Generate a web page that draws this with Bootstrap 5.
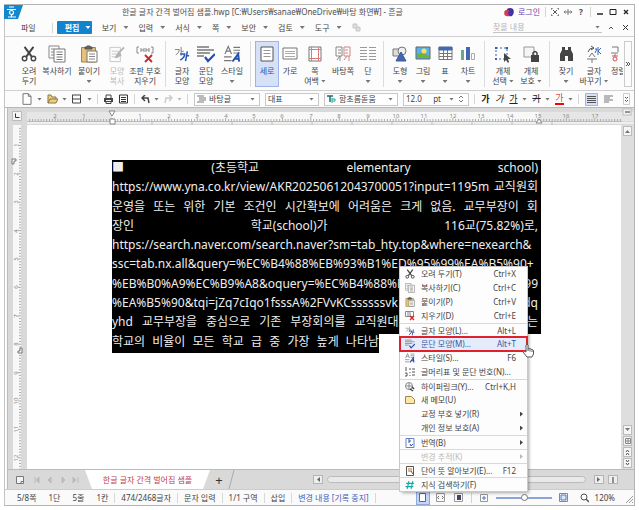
<!DOCTYPE html>
<html lang="ko">
<head>
<meta charset="utf-8">
<meta name="viewport" content="width=device-width, initial-scale=1">
<title>한글 글자 간격 벌어짐 샘플.hwp - 흔글</title>
<link href="https://cdn.jsdelivr.net/npm/bootstrap@5.3.0/dist/css/bootstrap.min.css" rel="stylesheet">
<style>
:root{--ui:"Noto Sans","Noto Sans CJK KR",sans-serif;}
body{font-family:var(--ui);font-size:8px;line-height:10px;color:#444;padding:4px;height:100vh;overflow:hidden;background:#fff}
button,input,select{font:inherit;color:inherit;background:none;border:0;padding:0;margin:0}
svg{display:block;flex:none;fill:none;stroke:#555}
.app-window{border:1px solid #b4b4b4;border-left-color:#c4c4c4;background:#fcfcfc}
.title-bar{min-height:14px}
.title-text{padding-left:99px;color:#505050}
.brand{margin-left:-1px}
.login{color:#6a3fb0}
.win-tools{gap:5px;padding-right:4px}
.win-tools button{width:8px}
.vline{width:1px;height:10px;background:#d4d4d4;flex:none}
.menu-row{min-height:18px;border-bottom:1px solid #cfcfcf;padding-right:5px}
.menu-row>button{display:flex;align-items:center;gap:7px;padding-right:10px}
.arrow{width:5px;height:3px;background:#777;clip-path:polygon(0 0,100% 0,50% 100%);flex:none}
.menu-row>.file-item{padding:0 16px 0 16px}
.menu-row>.edit-item{background:#1283cf;color:#fff;font-weight:700;border-radius:1px;height:13px;width:35px;padding:0 3px 0 8px;gap:6px;margin:0 10px 0 4px}
.edit-item .arrow{background:#fff}
.find-box{width:109px;border-bottom:1px solid #c4c4c4!important;margin-right:6px;padding-right:2px}
.find-box input{min-width:0;width:90px}
.find-box input::placeholder{color:#b4b4b4;opacity:1}
.menu-row>.tiny{padding:0}
.ribbon{min-height:53px;padding:4px 3px 3px 12px;border-bottom:1px solid #cfcfcf}
.tool{display:flex;flex-direction:column;align-items:center;width:24px;padding-top:3px;flex:none;white-space:nowrap;border:1px solid transparent}
.tool span{display:block}
.tool svg{margin-bottom:3px}
.tool .arrow{margin-top:4px}
.tool .with-arrow{display:flex;align-items:center;gap:2px}
.tool .with-arrow .arrow{margin:0}
.w-22{width:22px}.w-28{width:28px}.w-32{width:32px}
.tool.active{background:#d6e1f8;border-color:#9db5e6;color:#2d50a8}
.tool.disabled-tool{color:#b9b9b9}
.group-line{width:1px;background:#dcdcdc;margin:0 4px;flex:none}
.clip{width:14px;overflow:hidden;align-items:flex-start}
.more{width:8px;border:1px solid #ccc;margin-left:auto}
.quick{min-height:17px;padding:0 4px 0 16px;border-bottom:1px solid #b8b8b8}
.quick svg,.quick .vline{margin-right:6px}
.quick .arrow{margin-right:5px}
.quick svg.snug{margin-right:4px}
.combo{border:1px solid #c8c8c8;height:13px;background:#fff;padding:0 4px 0 2px;margin-right:5px;flex:none}
.quick .combo svg{margin-right:3px}
.quick .combo .arrow{margin-right:0}
.combo select,.combo input{appearance:none;min-width:0;flex:1 1 0;outline:0}
.w-66{width:66px}.w-54{width:54px}.w-74{width:74px}
.fmt{width:9px;height:12px;font-size:9px;color:#222}
.fmt.colored{border-bottom:2px solid red!important;color:#d44}
.quick .fmt-gap{margin-right:5px}
.workspace{background:#d9d9d9;border-left:1px solid #bcbcbc;margin-left:2px;min-height:0}
.canvas-row{min-height:0}
.ruler-h{height:17px;width:100%}
.ruler-v{width:19px}
.page{background:#fff;padding:35px 0 0 85px;min-width:0;overflow:hidden}
.selection{background:#000;color:#eee;width:429px;height:193px;display:grid;grid-auto-rows:1fr;font:12px/15px "Noto Sans","Noto Sans CJK KR",sans-serif;padding-right:3px;white-space:nowrap}
.selection>div{display:flex;justify-content:space-between;align-items:flex-start;min-height:0}
.selection .tail{background:#fff;margin-right:-3px;width:162px;align-self:stretch}
.vscroll{width:13px;background:#dedede;padding:1px 2px;gap:1px}
.vscroll button{width:9px;height:10px;border:1px solid #bbb;background:#f6f6f6;display:grid;place-items:center}
.tabs{min-height:20px;background:#d9d9d9;border-top:1px solid #bbb;padding-left:8px}
.tabs svg{margin-right:3px}
.tabs .tab-edge{margin-right:78px}
.sheet-tab{background:#fff;color:#c43a48;clip-path:polygon(0 0,100% 0,calc(100% - 7px) 100%,7px 100%);width:125px;height:19px;place-items:center}
.plus-tab{font-size:13px;color:#333;width:18px}
.hscroll{height:7px;border:1px solid #bbb;border-radius:4px;background:#e9e9e9}
.mini{width:10px;height:9px;border:1px solid #b4b4b4;background:#eee;display:grid;place-items:center}
.status{min-height:16px;padding-left:6px;background:#fafafa;border-top:1px solid #ccc}
.status>span{padding:0 6px;white-space:nowrap}
.status>.cell-end{border-right:1px solid #d8d8d8}
.status .note{color:#3c5fc0}
.view-icons{gap:6px}
.view-icons button{width:12px;height:12px;display:grid;place-items:center}
.view-icons .on{background:#c5d4f4;outline:1px solid #8fa9de}
.zoom-range{appearance:none;width:56px;height:8px;background:linear-gradient(#8da4d8,#8da4d8) center/100% 2px no-repeat}
.zoom-range::-webkit-slider-thumb{appearance:none;width:7px;height:7px;border:1px solid #777;border-radius:50%;background:#fff}
.ctx{left:400px;top:267px;width:127px;background:#fdfdfd;box-shadow:0 0 0 1px #c9c9c9,2px 2px 3px #0005}
.ctx button{display:grid;grid-template-columns:21px 1fr auto;align-items:center;width:100%;height:14px;padding-right:11px;text-align:left;white-space:nowrap}
.ctx svg{margin-left:5px}
.ctx .split{border-top:1px solid #d9d9d9}
.ctx .sub{padding-right:4px}
.ctx .off{color:#bbb}
.ctx .chosen{background:#e4ecfb;color:#3456a8;outline:2px solid #e0202c;outline-offset:-1px}
.sub i{width:3px;height:5px;background:currentColor;clip-path:polygon(0 0,100% 50%,0 100%)}
.hand{left:522px;top:343px}
</style>
</head>
<body>
<svg width="0" height="0" class="position-absolute" aria-hidden="true">
<symbol id="cut" viewBox="0 0 18 18"><path d="M4 1l8 11M14 1L6 12" stroke="#444" stroke-width="2.2"/><circle cx="4" cy="14" r="2.5" stroke="#444" stroke-width="1.6"/><circle cx="14" cy="14" r="2.5" stroke="#444" stroke-width="1.6"/></symbol>
<symbol id="copy" viewBox="0 0 18 18"><path d="M6 13H1V1h10v3M3 4h3M3 7h3M3 10h3" stroke="#888"/><path d="M6 4h11v13H6z" fill="#fff" stroke="#777"/><path d="M8.500 7h6M8.500 9.500h6M8.500 12h6M8.500 14.500h6" stroke="#777"/></symbol>
<symbol id="paste" viewBox="0 0 18 18"><path d="M1.500 2.500h14V17h-14z" fill="#e5c277" stroke="#a58448"/><path d="M5 4V2h2V1h3v1h2v2z" fill="#666" stroke="#555"/><path d="M7 6h10v11H7z" fill="#fff" stroke="#777"/><path d="M9 9h6M9 11.500h6M9 14h6" stroke="#888"/></symbol>
<symbol id="brush" viewBox="0 0 18 18"><path d="M1 2h11v15H1zM3 6h7M3 9h5M3 12h4" stroke="#c6c6c6"/><path d="M16 2l-6 6M10 8l-3 5 5-3z" fill="#bbb" stroke="#b3b3b3" stroke-width="2"/></symbol>
<symbol id="charshape" viewBox="0 0 18 18"><path d="M1 4h5q0 4-4 6M8 1v10M8 6h3" stroke="#777"/><path d="M7 9h5q0 4-5 7M15 6l-2 11M14 11h3" stroke="#2856b4" stroke-width="1.700"/></symbol>
<symbol id="parashape" viewBox="0 0 18 18"><path d="M0 2h12M0 5h17M0 8h13M0 11h7" stroke="#777" stroke-width="1.300"/><path d="M8 12l3 4 7-7" stroke="#2450ad" stroke-width="2.200"/></symbol>
<symbol id="styles" viewBox="0 0 18 18"><path d="M1 9l3.500-8L8 9M2 6h5M10 2h7M10 5h7M10 8h7M0 12h8M0 16h8" stroke="#777" stroke-width="1.200"/><path d="M9 17l6-8 1 8M11 14h5" stroke="#2450ad" stroke-width="2"/></symbol>
<symbol id="doc" viewBox="0 0 18 18"><path d="M3 1h8l4 4v12H3zM11 1v4h4" stroke="#777" fill="#fff" stroke-width="1.500"/></symbol>
<symbol id="hash" viewBox="0 0 18 18"><path d="M7 2L4 16M14 2l-3 14M2 6h14M1 12h14" stroke="#17a8a8" stroke-width="2"/></symbol>
</svg>

<div class="app-window h-100 d-flex flex-column">
  <header class="title-bar d-flex align-items-center">
    <svg class="brand" width="19" height="14" viewBox="0 0 19 14"><path d="M0 0h19l-5 14H0z" fill="#1388cd" stroke="none"/><path d="M5 2h5M3 4.500h9M4 12h8M7.500 10v2" stroke="#fff" stroke-width="1.200"/><circle cx="7.500" cy="7.500" r="2" stroke="#fff" stroke-width="1.200"/></svg>
    <div class="title-text flex-grow-1 text-nowrap">한글 글자 간격 벌어짐 샘플.hwp [C:₩Users₩sanae₩OneDrive₩바탕 화면₩] - 흔글</div>
    <div class="win-tools d-flex align-items-center">
      <button class="login w-auto d-flex align-items-center gap-1 text-nowrap" type="button"><svg width="10" height="9" viewBox="0 0 10 9" stroke="none"><path d="M3 1q3-2 6 0 2 4-1 7-4 1-5-2z" fill="#3c2fa0" stroke="none"/><circle cx="3.500" cy="5" r="3.300" fill="#d83a50" stroke="none"/><path d="M5 2q4 1 3 6-4 0-4-3z" fill="#4a2fb0" stroke="none"/></svg>로그인</button>
      <span class="vline"></span>
      <button type="button" aria-label="전체 화면"><svg width="8" height="8"><path d="M0 2V0h2M6 0h2v2M8 6v2H6M2 8H0V6M2 2l4 4M6 2L2 6" /></svg></button>
      <button type="button" aria-label="이동"><svg width="8" height="8"><path d="M0 4h8M4 1v6M1.500 2.500L0 4l1.500 1.500M6.500 2.500L8 4 6.500 5.500" stroke="#777"/></svg></button>
      <button type="button" class="fw-bold">?</button>
      <span class="vline"></span>
      <button type="button" aria-label="최소화"><svg width="8" height="8"><path d="M1 6h6" stroke="#222" stroke-width="1.500"/></svg></button>
      <button type="button" aria-label="최대화"><svg width="8" height="8"><path d="M1 1.500h6v5H1z" stroke="#222"/></svg></button>
      <button type="button" aria-label="닫기"><svg width="8" height="8"><path d="M2 2l4 4M6 2L2 6" stroke="#222" stroke-width="1.300"/></svg></button>
    </div>
  </header>

  <nav class="menu-row d-flex align-items-center text-nowrap">
    <button class="file-item" type="button">파일</button><span class="vline"></span>
    <button class="edit-item" type="button">편집<i class="arrow"></i></button>
    <button type="button">보기<i class="arrow"></i></button>
    <button type="button">입력<i class="arrow"></i></button>
    <button type="button">서식<i class="arrow"></i></button>
    <button type="button">쪽<i class="arrow"></i></button>
    <button type="button">보안<i class="arrow"></i></button>
    <button type="button">검토<i class="arrow"></i></button>
    <button type="button">도구<i class="arrow"></i></button>
    <svg width="9" height="9"><path d="M1 1h4v4H1zM4 4h4v4H4z" fill="#ddd" stroke="#c8c8c8"/></svg>
    <div class="find-box d-flex align-items-center justify-content-between ms-auto"><input type="text" placeholder="찾을 내용" aria-label="찾을 내용"><i class="arrow"></i></div>
    <button class="tiny me-2" type="button" aria-label="접기"><svg width="6" height="6"><path d="M1 4l2-2 2 2"/></svg></button>
    <button class="tiny" type="button" aria-label="닫기"><svg width="7" height="7"><path d="M1 1l5 5M6 1L1 6" stroke="#333"/></svg></button>
  </nav>

  <div class="ribbon d-flex">
    <button class="tool" type="button"><svg width="16" height="18"><use href="#cut"/></svg><span>오려</span><span>두기</span></button>
    <button class="tool w-32" type="button"><svg width="18" height="18"><use href="#copy"/></svg><span>복사하기</span></button>
    <button class="tool w-32" type="button"><svg width="18" height="18"><use href="#paste"/></svg><span>붙이기</span><i class="arrow"></i></button>
    <button class="tool disabled-tool" type="button"><svg width="17" height="18"><use href="#brush"/></svg><span>모양</span><span>복사</span></button>
    <button class="tool w-32" type="button"><svg width="18" height="18"><path d="M3 2H1v6h2M15 2h2v6h-2M5 3v4M8 3v4M10 3v4M13 3v4M5 5h3M10 5h3" stroke="#888"/><path d="M9 10l7 7M16 10l-7 7" stroke="#d3212d" stroke-width="1.800"/></svg><span>조판 부호</span><span>지우기</span></button>
    <span class="group-line"></span>
    <button class="tool" type="button"><svg width="16" height="18"><use href="#charshape"/></svg><span>글자</span><span>모양</span></button>
    <button class="tool" type="button"><svg width="18" height="18"><use href="#parashape"/></svg><span>문단</span><span>모양</span></button>
    <button class="tool w-28" type="button"><svg width="17" height="18"><use href="#styles"/></svg><span>스타일</span><i class="arrow"></i></button>
    <span class="group-line"></span>
    <button class="tool active" type="button"><svg width="14" height="18"><path d="M1 2h12v14H1z" stroke="#555" fill="#fff"/><path d="M3.500 5.500h7M3.500 8.500h7M3.500 11.500h7" stroke="#999"/></svg><span>세로</span></button>
    <button class="tool w-22" type="button"><svg width="16" height="18"><path d="M1 3h14v11H1z" stroke="#777" fill="#fff"/><path d="M3 6.500h10M3 8.500h10M3 11.500h10" stroke="#aaa"/></svg><span>가로</span></button>
    <button class="tool w-28" type="button"><svg width="14" height="18"><path d="M1 2h12v14H1z" stroke="#777" fill="#fff"/><path d="M3.500 2v14M10.500 2v14M1 4.500h12M1 13.500h12" stroke="#d77a7a"/></svg><span>쪽</span><span class="with-arrow">여백<i class="arrow"></i></span></button>
    <button class="tool w-28" type="button"><svg width="16" height="18"><path d="M1 2h6v9H1zM2 15l3-4M3 5h3M3 8h3M5 11v5" stroke="#888"/><path d="M9 2h6v9H9zM9 15l3-4M10 5h3M10 8h3M14 11v5" stroke="#d58080"/></svg><span>바탕쪽</span></button>
    <button class="tool w-22" type="button"><svg width="16" height="18"><path d="M0 2.500h7M0 5.500h7M0 8.500h7M0 11.500h7M0 14.500h7M9 2.500h7M9 5.500h7M9 8.500h7M9 11.500h7M9 14.500h7" stroke="#999"/></svg><span>단</span><i class="arrow"></i></button>
    <span class="group-line"></span>
    <button class="tool" type="button"><svg width="16" height="18"><path d="M1 4h8v7H1z" fill="#ddd" stroke="#777"/><circle cx="10" cy="6" r="4" fill="#eee" stroke="#777"/><path d="M9 7l5 9H4z" fill="#4468b0" stroke="#36589c"/></svg><span>도형</span><i class="arrow"></i></button>
    <button class="tool w-22" type="button"><svg width="16" height="18"><path d="M1 2h14v12H1z" fill="#5ab0e8" stroke="#666"/><path d="M2 13V9q5-3 12 2v2z" fill="#6fb33c" stroke="none"/><circle cx="9" cy="6" r="2.500" fill="#ffe25c" stroke="none"/></svg><span>그림</span><i class="arrow"></i></button>
    <button class="tool w-22" type="button"><svg width="15" height="18"><path d="M1 2.500h13v12H1zM5.500 5v10M9.500 5v10M1 8.500h13M1 11.500h13" stroke="#777"/><path d="M1 2h13v3H1z" fill="#4468b0" stroke="#4468b0"/></svg><span>표</span><i class="arrow"></i></button>
    <button class="tool" type="button"><svg width="16" height="18"><path d="M1 5h3v10H1z" fill="#67a98c" stroke="none"/><path d="M6 2h4v13H6z" fill="#4468b0" stroke="none"/><path d="M11.500 8.500h3v6h-3z" stroke="#aaa"/></svg><span>차트</span><i class="arrow"></i></button>
    <span class="group-line"></span>
    <button class="tool w-28" type="button"><svg width="18" height="18"><path d="M2 3h11v11H2z" stroke="#3b5da8" stroke-dasharray="2 2"/><path d="M1 2h2v2H1zM12 2h2v2h-2zM1 13h2v2H1z" fill="#3b5da8" stroke="none"/><path d="M10 8v9l2-2 2 3 1-1-1-3h3z" fill="#444" stroke="none"/></svg><span>개체</span><span class="with-arrow">선택<i class="arrow"></i></span></button>
    <button class="tool w-28" type="button"><svg width="18" height="18"><path d="M2 2h10v10H2z" fill="#f5f5f5" stroke="#999"/><path d="M9 10h8v7H9z" fill="#444" stroke="none"/><path d="M11 10V8q2-3 4 0v2" stroke="#444" stroke-width="1.500"/></svg><span>개체</span><span class="with-arrow">보호<i class="arrow"></i></span></button>
    <span class="group-line"></span>
    <button class="tool" type="button"><svg width="15" height="18"><path d="M3 2h3v3h3V2h3v3l2 4v7H9v-5H6v5H1V9l2-4z" fill="#444" stroke="none"/></svg><span>찾기</span><i class="arrow"></i></button>
    <button class="tool w-32" type="button"><svg width="16" height="18"><path d="M2 7q1-4 5-4M5 1l3 2-3 2" stroke="#555"/><path d="M12 2v8M9 4h2l-2 4M15 3l-3 3 3 3" stroke="#3866b8"/><path d="M6 8l-3 4M6 8l3 4M1 14h10M6 14v4" stroke="#777"/></svg><span>글자</span><span class="with-arrow">바꾸기<i class="arrow"></i></span></button>
    <button class="tool clip" type="button"><svg width="8" height="18"><path d="M1 2h6v5M0 8h7" stroke="#777"/><path d="M1 11h6M4 9v2" stroke="#d05050"/><circle cx="4" cy="14" r="2" stroke="#d05050"/></svg><span>정렬</span></button>
    <button class="more" type="button" aria-label="더 보기"><svg width="6" height="6"><path d="M1 1l2 2-2 2M3 1l2 2-2 2"/></svg></button>
  </div>

  <div class="quick d-flex align-items-center">
    <svg width="12" height="12" class="snug"><use href="#doc"/></svg><i class="arrow"></i>
    <svg width="11" height="10" class="snug"><path d="M1 9V1h3l1 2h4v2M1 9l2-4h8L9 9z" fill="#edcf84" stroke="#8b7440"/></svg><i class="arrow"></i>
    <svg width="9" height="10"><path d="M.500 1v8h8V1M1 5h8M0 1h9" stroke="#444"/></svg><i class="arrow"></i>
    <span class="vline"></span>
    <svg width="9" height="10"><path d="M2 4V1h5v3M2 8v1.500h5V8" stroke="#444"/><path d="M0 4h9v4H0z" fill="#444" stroke="none"/><path d="M2 6.500h5" stroke="#fff"/></svg>
    <svg width="9" height="10"><path d="M.500 1h8v8h-8zM2 3.500h5M2 5.500h5M2 7.500h5" stroke="#333"/></svg>
    <span class="vline"></span>
    <svg width="9" height="9" class="snug"><path d="M1 3h6l1 5M4 0L1 3l3 3" stroke="#444" stroke-width="1.500"/></svg><i class="arrow"></i>
    <svg width="9" height="9" class="snug"><path d="M8 3H2L1 8M5 0l3 3-3 3" stroke="#ccc" stroke-width="1.500"/></svg><i class="arrow opacity-50"></i>
    <span class="vline"></span>
    <div class="combo w-66 d-flex align-items-center"><svg width="9" height="8"><path d="M0 1h7M2 3h7M2 5h7M0 7h7" stroke="#777"/></svg><select aria-label="스타일"><option>바탕글</option></select><i class="arrow"></i></div>
    <div class="combo w-54 d-flex align-items-center"><select aria-label="언어"><option>대표</option></select><i class="arrow"></i></div>
    <div class="combo w-74 d-flex align-items-center"><svg width="9" height="8"><path d="M0 1h6M3 1v6" stroke="#267" stroke-width="1.500"/><path d="M5 4h3v2H5M5 3v5" stroke="#2a9"/></svg><select aria-label="글꼴"><option>함초롬돋움</option></select><i class="arrow"></i></div>
    <div class="combo w-66 d-flex align-items-center"><input type="text" value="12.0" aria-label="글자 크기"><span class="me-2">pt</span><i class="arrow"></i><svg class="ms-1 me-0" width="6" height="10"><path d="M1 4l2-2 2 2M1 6l2 2 2-2" stroke="#777"/></svg></div>
    <span class="vline"></span>
    <button class="fmt fw-bold fmt-gap" type="button">가</button>
    <button class="fmt fst-italic fmt-gap" type="button">가</button>
    <button class="fmt text-decoration-underline me-1" type="button">가</button><i class="arrow"></i>
    <button class="fmt text-decoration-line-through me-1" type="button">가</button><i class="arrow"></i>
    <button class="fmt colored me-1" type="button">가</button><i class="arrow"></i>
    <span class="vline"></span>
    <svg width="13" height="13"><path d="M.500.500h12v12H.500z" fill="#d6e1f8" stroke="#9db5e6"/><path d="M2 3.500h9M2 5.500h9M2 7.500h9M2 9.500h9" stroke="#555"/></svg>
    <svg width="9" height="9"><path d="M0 1h9M0 3h6M0 5h9M0 7h5" stroke="#777"/></svg>
    <svg width="7" height="12" class="ms-auto me-0"><path d="M.500.500h6v11h-6z" stroke="#ccc"/><path d="M2 4l1.500 1.500L5 4M2 7l1.500 1.500L5 7"/></svg>
  </div>

  <main class="workspace flex-grow-1 d-flex flex-column">
    <svg class="ruler-h" id="rulerH"></svg>
    <div class="canvas-row d-flex flex-grow-1">
      <svg class="ruler-v h-100" id="rulerV"></svg>
      <article class="page flex-grow-1">
        <div class="selection">
          <div><span>■</span><span>(초등학교</span><span>elementary</span><span>school)</span></div>
          <div><span>https://www.yna.co.kr/view/AKR20250612043700051?input=1195m</span><span>교직원회</span></div>
          <div><span>운영을</span><span>또는</span><span>위한</span><span>기본</span><span>조건인</span><span>시간확보에</span><span>어려움은</span><span>크게</span><span>없음.</span><span>교무부장이</span><span>회</span></div>
          <div><span>장인</span><span>학교(school)가</span><span>116교(75.82%)로,</span></div>
          <div>https://search.naver.com/search.naver?sm=tab_hty.top&amp;where=nexearch&amp;</div>
          <div>ssc=tab.nx.all&amp;query=%EC%B4%88%EB%93%B1%ED%95%99%EA%B5%90+</div>
          <div><span>%EB%B0%A9%EC%B9%A8&amp;oquery=%EC%B4%88%EB%93%</span><span>99</span></div>
          <div><span>%EA%B5%90&amp;tqi=jZq7cIqo1fsssA%2FVvKCssssssvk</span><span>dq</span></div>
          <div><span>yhd</span><span>교무부장을</span><span>중심으로</span><span>기존</span><span>부장회의를</span><span>교직원대표와의</span><span>협의회로</span><span>운영하는</span></div>
          <div><div class="d-flex flex-grow-1 justify-content-between"><span>학교의</span><span>비율이</span><span>모든</span><span>학교</span><span>급</span><span>중</span><span>가장</span><span>높게</span><span>나타남</span></div><span class="tail"></span></div>
        </div>
      </article>
      <div class="vscroll d-flex flex-column">
        <button type="button" aria-label="위로"><svg width="5" height="4"><path d="M0 4l2.500-3L5 4z" fill="#777" stroke="none"/></svg></button>
        <button class="mt-auto" type="button" aria-label="아래로"><svg width="5" height="4"><path d="M0 0l2.500 3L5 0z" fill="#777" stroke="none"/></svg></button>
        <button type="button" aria-label="쪽 보기"><svg width="6" height="6"><path d="M.500.500h5v5h-5zM2 2h2v2H2z" stroke="#888"/></svg></button>
        <button type="button" aria-label="이전 쪽"><svg width="5" height="6"><path d="M1 3l1.500-2L4 3M1 6l1.500-2L4 6"/></svg></button>
        <button type="button" aria-label="다음 쪽"><svg width="5" height="6"><path d="M1 0l1.500 2L4 0M1 3l1.500 2L4 3"/></svg></button>
      </div>
    </div>
    <div class="tabs d-flex align-items-center">
      <svg width="8" height="8"><path d="M.500.500h7v7h-7zM5 8V5.500h3" stroke="#777" fill="#f3f3f3"/></svg><span class="vline me-1"></span>
      <svg width="50" height="8"><g fill="#bbb" stroke="#bbb"><path d="M3 1v6M7 1v6L4.500 4z" /><path d="M19 1v6l-3-3zM30 1v6l3-3z"/><path d="M41 1v6l3-3zM46 1v6"/></g></svg>
      <div class="sheet-tab d-grid text-nowrap">한글 글자 간격 벌어짐 샘플</div>
      <button class="plus-tab" type="button" aria-label="새 탭">+</button>
      <svg class="tab-edge" width="7" height="19"><path d="M1 19L6 0" stroke="#aaa"/></svg>
      <button class="mini me-1" type="button" aria-label="왼쪽"><svg class="m-0" width="4" height="5"><path d="M4 0L1 2.500 4 5z" fill="#666" stroke="none"/></svg></button>
      <div class="hscroll flex-grow-1 me-2"></div>
      <button class="mini me-1" type="button" aria-label="오른쪽"><svg class="m-0" width="4" height="5"><path d="M0 0l3 2.500L0 5z" fill="#666" stroke="none"/></svg></button>
      <button class="mini me-3" type="button" aria-label="분할"><svg class="m-0" width="2" height="6"><path d="M1 0v6" stroke="#333"/></svg></button>
    </div>
  </main>

  <footer class="status d-flex align-items-center">
    <span>5/8쪽</span><span>1단</span><span>5줄</span><span class="cell-end">1칸</span><span class="cell-end">474/2468글자</span><span class="cell-end">문자 입력</span><span class="cell-end">1/1 구역</span><span class="cell-end">삽입</span><span class="cell-end note">변경 내용 [기록 중지]</span>
    <div class="view-icons ms-auto d-flex align-items-center">
      <button class="on" type="button" aria-label="쪽 윤곽"><svg width="9" height="9"><path d="M1.500.500h6v8h-6z" fill="#fff" stroke="#666"/></svg></button>
      <button type="button" aria-label="폭 맞춤"><svg width="9" height="9"><path d="M.500.500h8v8h-8z" stroke="#999"/><path d="M3 3L1.500 4.500 3 6M6 3l1.500 1.500L6 6" stroke="#666"/></svg></button>
      <button type="button" aria-label="쪽 맞춤"><svg width="9" height="9"><path d="M.500.500h8v8h-8z" stroke="#999"/><path d="M3 2h4v5H3z" fill="#446" stroke="none"/></svg></button>
      <span class="vline"></span>
      <button type="button" aria-label="축소"><svg width="8" height="8"><path d="M.500.500h7v7h-7z" stroke="#999"/><path d="M3 3h2v2H3z" stroke="#5378c8"/></svg></button>
      <input class="zoom-range" type="range" min="0" max="100" value="52" aria-label="확대 비율">
      <button type="button" aria-label="확대"><svg width="9" height="9"><path d="M.500.500h8v8h-8z" stroke="#888"/><path d="M2 2h5v5H2z" stroke="#5378c8" fill="#dbe6fb"/></svg></button>
      <svg width="9" height="10" class="ms-1"><circle cx="4" cy="4" r="3"/><path d="M6 6l3 3" stroke-width="1.500"/></svg>
      <span>120%</span>
      <svg width="9" height="13" class="ms-1"><path d="M1 12l7-7M4 12l4-4M7 12l1-1" stroke="#999"/></svg>
    </div>
  </footer>
</div>

<div class="ctx position-absolute" role="menu">
  <button type="button" role="menuitem"><svg width="10" height="10"><use href="#cut"/></svg><span>오려 두기(T)</span><span>Ctrl+X</span></button>
  <button type="button" role="menuitem"><svg width="10" height="10"><use href="#copy"/></svg><span>복사하기(C)</span><span>Ctrl+C</span></button>
  <button type="button" role="menuitem"><svg width="10" height="10"><use href="#paste"/></svg><span>붙이기(P)</span><span>Ctrl+V</span></button>
  <button type="button" role="menuitem"><svg width="10" height="10"><path d="M.500.500h8v5h-8zM3 1v4M5 1v4" stroke="#888"/><path d="M5 5l4 4M9 5L5 9" stroke="#d22" stroke-width="1.300"/></svg><span>지우기(D)</span><span>Ctrl+E</span></button>
  <button class="split" type="button" role="menuitem"><svg width="10" height="10"><use href="#charshape"/></svg><span>글자 모양(L)...</span><span>Alt+L</span></button>
  <button class="chosen" type="button" role="menuitem"><svg width="10" height="10"><use href="#parashape"/></svg><span>문단 모양(M)...</span><span>Alt+T</span></button>
  <button type="button" role="menuitem"><svg width="10" height="10"><use href="#styles"/></svg><span>스타일(S)...</span><span>F6</span></button>
  <button type="button" role="menuitem"><svg width="10" height="10"><path d="M1 0v4M0 9h2V6H0M5 1v2M5 5v1M5 8v1M7 2h3M7 5h3M7 8h3"/></svg><span>글머리표 및 문단 번호(N)...</span></button>
  <button class="split" type="button" role="menuitem"><svg width="10" height="10"><circle cx="4" cy="4" r="3.500" stroke="#888"/><path d="M1 4h6M4 1v6" stroke="#888"/><path d="M5 7l3 2M7 5l2 2" stroke="#444" stroke-width="1.500"/></svg><span>하이퍼링크(Y)...</span><span>Ctrl+K,H</span></button>
  <button type="button" role="menuitem"><svg width="10" height="10"><path d="M.500 1.500h6l3 3v4h-9z" fill="#ffe7a3" stroke="#9a8555"/></svg><span>새 메모(U)</span></button>
  <button class="sub" type="button" role="menuitem"><span></span><span>교정 부호 넣기(R)</span><i></i></button>
  <button class="sub" type="button" role="menuitem"><span></span><span>개인 정보 보호(A)</span><i></i></button>
  <button class="sub split" type="button" role="menuitem"><svg width="10" height="10"><path d="M1 .500h8v9H1z" stroke="#6b83b8"/><path d="M3 2h2v2H3M5 6l1 2 2-2" stroke="#2d53b0"/></svg><span>번역(B)</span><i></i></button>
  <button class="sub split off" type="button" role="menuitem" disabled><span></span><span>변경 추적(K)</span><i></i></button>
  <button class="split" type="button" role="menuitem"><svg width="10" height="10"><path d="M1.500.500h7v9h-7z" fill="#fff"/><path d="M3 3h4M3 5h4" stroke="#b87030"/><path d="M6 5l2 3"/></svg><span>단어 뜻 알아보기(E)...</span><span>F12</span></button>
  <button class="split" type="button" role="menuitem"><svg width="10" height="10"><use href="#hash"/></svg><span>지식 검색하기(F)</span></button>
</div>
<svg class="hand position-absolute" width="12" height="15" viewBox="0 0 12 15" aria-hidden="true"><path d="M4 9V2q1-2 2 0v4q1-1 2 0 1-1 2 1 1-1 1.500 1v3l-1.500 3H5L1 9q0-2 2-.500z" fill="#fff" stroke="#555"/><path d="M6 6v2M8 6.500v2M10 7.500v1.500"/></svg>

<script>
const NS='http://www.w3.org/2000/svg';
function el(p,n,a,t){const e=document.createElementNS(NS,n);for(const k in a)e.setAttribute(k,a[k]);if(t!==undefined)e.textContent=t;p.appendChild(e);return e;}
const CM=28.4;
(function(){
  const s=document.getElementById('rulerH'),o=104;
  el(s,'rect',{x:19,y:4,width:'100%',height:9,fill:'#e6e6e6',stroke:'none'});
  el(s,'rect',{x:o,y:4,width:427,height:9,fill:'#f8f8f8',stroke:'none'});
  el(s,'rect',{x:19,y:14,width:'100%',height:2,fill:'#efefef',stroke:'none'});
  let d='',m='';
  for(let i=-30;i<180;i++){const x=(o+i*CM/10).toFixed(1);if(x>19)d+=`M${x} ${i%10?11:10}V13`;}
  for(let i=1;i<12;i++)m+=`M${o+i*40} 13v4`;
  el(s,'path',{d:d,stroke:'#aaa'});
  el(s,'path',{d:'M19 13.5H614'+m,stroke:'#bbb'});
  for(let i=-2;i<18;i++)if(i)el(s,'text',{x:Math.round(o+i*CM),y:10,'font-size':6,'text-anchor':'middle',fill:'#888',stroke:'none'},Math.abs(i));
  el(s,'path',{d:`M${o-3} 3h6l-3 5zM${o-2} 11h5v5h-5zM528 15l3-4 3 4z`,fill:'#fff',stroke:'#888'});
  el(s,'path',{d:'M4.500 3.500h9v9h-9z',fill:'#f5f5f5',stroke:'#bbb'});
  el(s,'path',{d:'M7.500 5.500v4h4',stroke:'#333'});
  el(s,'rect',{x:615,y:1,width:8,height:6,fill:'#f3f3f3',stroke:'#bbb'});
  el(s,'path',{d:'M617 4h5',stroke:'#333'});
})();
(function(){
  const s=document.getElementById('rulerV'),o=-8;
  el(s,'rect',{x:5,y:0,width:8,height:'100%',fill:'#f8f8f8',stroke:'none'});
  let d='';
  for(let i=4;i<200;i++){d+=`M${i%10?11:10} ${(o+i*CM/10).toFixed(1)}H13`;}
  el(s,'path',{d:d,stroke:'#aaa'});
  for(let i=1;i<13;i++){const y=Math.round(o+i*CM);el(s,'text',{x:8,y:y+2,transform:`rotate(-90 8 ${y})`,'font-size':6,'text-anchor':'middle',fill:'#888',stroke:'none'},i);}
  el(s,'path',{d:'M4 34h4v2H6v3H4zM14 228h-4v-2h2v-3h2z',fill:'#fff',stroke:'#777'});
})();
</script>
<script src="https://cdn.jsdelivr.net/npm/bootstrap@5.3.0/dist/js/bootstrap.bundle.min.js"></script>
</body>
</html>
